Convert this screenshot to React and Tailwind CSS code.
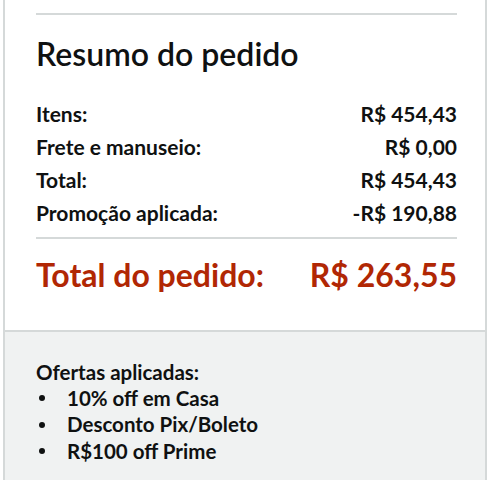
const rows = [
  ["Itens:", "R$ 454,43"],
  ["Frete e manuseio:", "R$ 0,00"],
  ["Total:", "R$ 454,43"],
  ["Promoção aplicada:", "-R$ 190,88"],
];

const offers = ["10% off em Casa", "Desconto Pix/Boleto", "R$100 off Prime"];

export default function App() {
  return (
    <div
      className="h-[480px] w-[500px] overflow-hidden bg-white text-[#0f1111]"
      style={{ fontFamily: 'Lato, "Open Sans", sans-serif' }}
    >
      <div className="ml-[3px] w-[484px] border-x-2 border-[#d5d9d9]">
        {/* order summary */}
        <div className="pl-[31px] pr-[28px] pt-[13px] pb-[38px]">
          <div className="h-[2px] bg-[#d5d9d9]" />
          <h2 className="mt-[22px] text-[32px] font-semibold leading-[34px]">
            Resumo do pedido
          </h2>
          <div className="mt-[26px] flex flex-col">
            {rows.map(([label, value]) => (
              <div
                key={label}
                className="flex h-[33px] items-center justify-between text-[21px] font-bold"
              >
                <span>{label}</span>
                <span>{value}</span>
              </div>
            ))}
          </div>
          <div className="mt-[8px] h-[2px] bg-[#d5d9d9]" />
          <div className="mt-[19px] flex items-center justify-between text-[32px] font-bold leading-[34px] text-[#b12704]">
            <span>Total do pedido:</span>
            <span>R$ 263,55</span>
          </div>
        </div>

        {/* applied offers */}
        <div className="h-[160px] border-t-2 border-[#d5d9d9] bg-[#f0f2f2] pl-[31px] pt-[27px]">
          <p className="text-[20.5px] font-bold leading-[26px]">
            Ofertas aplicadas:
          </p>
          <ul className="flex flex-col">
            {offers.map((o) => (
              <li
                key={o}
                className="flex h-[26.5px] items-center text-[20.5px] font-bold"
              >
                <span className="ml-[3px] mr-[22px] h-[6px] w-[6px] rounded-full bg-[#0f1111]" />
                {o}
              </li>
            ))}
          </ul>
        </div>
      </div>
    </div>
  );
}
